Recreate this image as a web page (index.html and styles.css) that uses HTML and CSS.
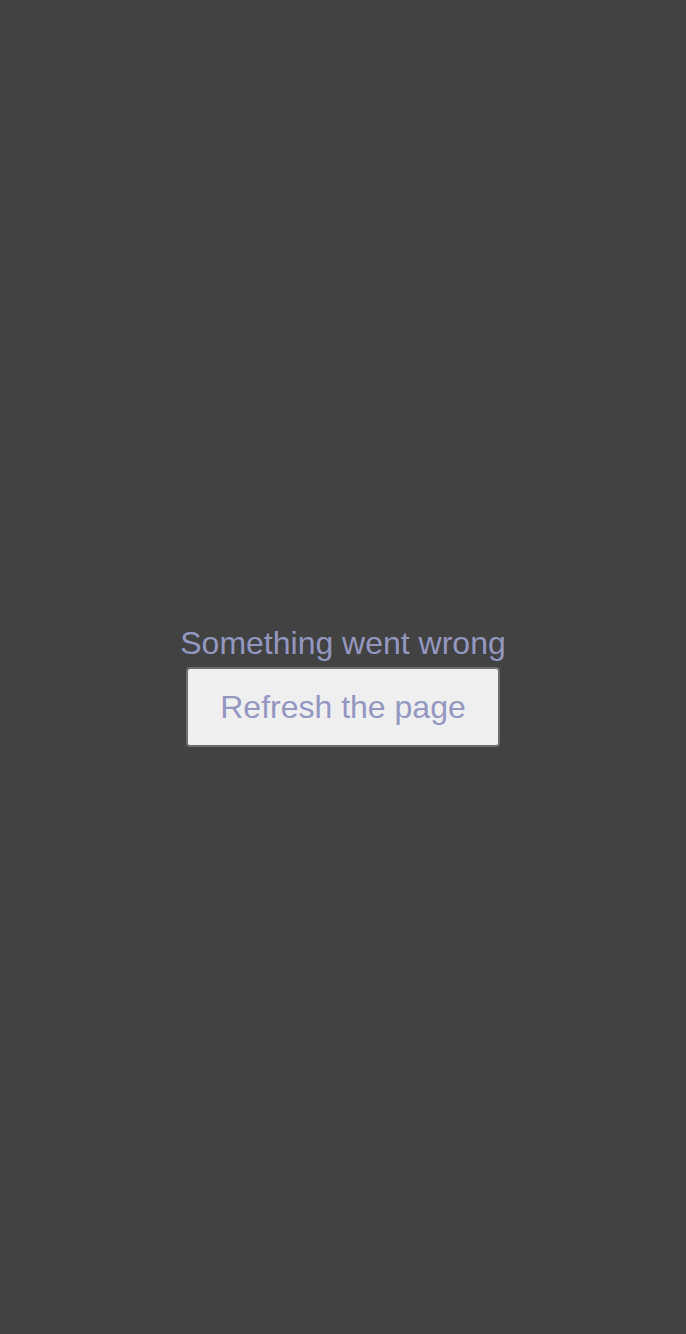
FILE: index.html
```html
<!DOCTYPE html>
<html>
<head>
<meta charset="utf-8">
<link rel="stylesheet" href="styles.css">
</head>
<body>
<div class="screen">
  <div class="error">
    <div class="error-title">Something went wrong</div>
    <button class="error-button">Refresh the page</button>
  </div>
</div>
</body>
</html>
```
FILE: styles.css
```css
html, body {
  margin: 0;
  padding: 0;
  background: #424242;
}
.screen {
  height: 1334px;
  display: flex;
  flex-direction: column;
  align-items: center;
  padding-top: 625px;
  box-sizing: border-box;
  font-family: "Liberation Sans", Arial, sans-serif;
  color: #9497c0;
}
.error {
  display: flex;
  flex-direction: column;
  align-items: center;
}
.error-title {
  font-size: 32px;
  line-height: 37px;
}
.error-button {
  margin-top: 5px;
  font-family: "Liberation Sans", Arial, sans-serif;
  font-size: 32px;
  line-height: 37px;
  color: #9497c0;
  background: #efefef;
  border: 2px solid #6f6f6f;
  border-radius: 4px;
  padding: 20px 32px 19px;
  width: 314px;
  height: 80px;
  box-sizing: border-box;
}
```
